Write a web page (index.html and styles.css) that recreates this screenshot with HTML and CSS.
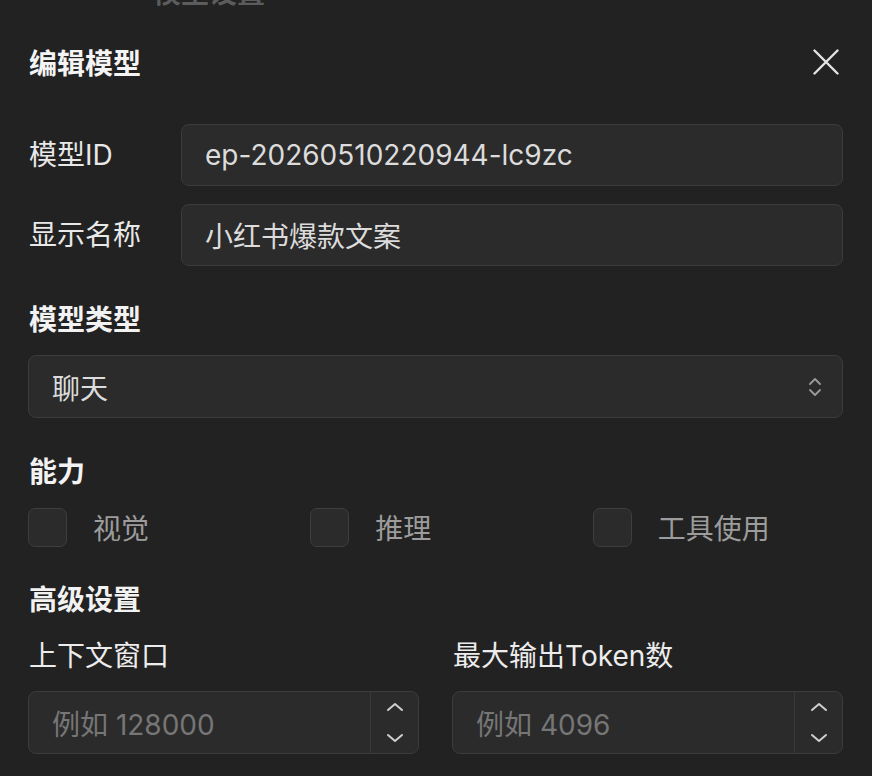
FILE: index.html
```html
<!DOCTYPE html>
<html lang="zh-CN">
<head>
<meta charset="utf-8">
<title>编辑模型</title>
<link rel="stylesheet" href="styles.css">
</head>
<body>
<div class="ghost">模型设置</div>
<div class="panel">
  <div class="header">
    <h2 class="title">编辑模型</h2>
    <button class="close" aria-label="关闭">
      <svg width="26" height="26" viewBox="0 0 26 26"><path d="M1.5 1.5 L24.5 24.5 M24.5 1.5 L1.5 24.5" stroke="#e4e4e4" stroke-width="2.4" stroke-linecap="round" fill="none"/></svg>
    </button>
  </div>

  <div class="field-row first">
    <label class="label">模型ID</label>
    <div class="input">ep-20260510220944-lc9zc</div>
  </div>
  <div class="field-row second">
    <label class="label">显示名称</label>
    <div class="input">小红书爆款文案</div>
  </div>

  <h3 class="section">模型类型</h3>
  <div class="select">
    <span>聊天</span>
    <svg class="updown" width="14" height="24" viewBox="0 0 14 24"><path d="M2 9 L7 4 L12 9 M2 15 L7 20 L12 15" stroke="#9a9a9a" stroke-width="1.8" stroke-linecap="round" stroke-linejoin="round" fill="none"/></svg>
  </div>

  <h3 class="section">能力</h3>
  <div class="checks">
    <label class="check"><span class="box"></span><span class="check-text">视觉</span></label>
    <label class="check"><span class="box"></span><span class="check-text">推理</span></label>
    <label class="check"><span class="box"></span><span class="check-text">工具使用</span></label>
  </div>

  <h3 class="section">高级设置</h3>
  <div class="adv">
    <div class="adv-col">
      <div class="sublabel">上下文窗口</div>
      <div class="number">
        <span class="placeholder">例如 128000</span>
        <div class="spin">
          <svg width="18" height="10" viewBox="0 0 18 10"><path d="M2 8 L9 2 L16 8" stroke="#cfcfcf" stroke-width="2" stroke-linecap="round" stroke-linejoin="round" fill="none"/></svg>
          <svg width="18" height="10" viewBox="0 0 18 10"><path d="M2 2 L9 8 L16 2" stroke="#cfcfcf" stroke-width="2" stroke-linecap="round" stroke-linejoin="round" fill="none"/></svg>
        </div>
      </div>
    </div>
    <div class="adv-col">
      <div class="sublabel">最大输出Token数</div>
      <div class="number">
        <span class="placeholder">例如 4096</span>
        <div class="spin">
          <svg width="18" height="10" viewBox="0 0 18 10"><path d="M2 8 L9 2 L16 8" stroke="#cfcfcf" stroke-width="2" stroke-linecap="round" stroke-linejoin="round" fill="none"/></svg>
          <svg width="18" height="10" viewBox="0 0 18 10"><path d="M2 2 L9 8 L16 2" stroke="#cfcfcf" stroke-width="2" stroke-linecap="round" stroke-linejoin="round" fill="none"/></svg>
        </div>
      </div>
    </div>
  </div>
</div>
</body>
</html>
```

FILE: styles.css
```css
* { box-sizing: border-box; }
html, body {
  margin: 0;
  padding: 0;
  background: #222222;
  overflow: hidden;
}
body {
  width: 872px;
  height: 776px;
  font-family: "Inter", "Noto Sans CJK SC", sans-serif;
  font-size: 28px;
  color: #e6e6e6;
}
.ghost {
  height: 32px;
  margin-top: -23px;
  padding-left: 153px;
  line-height: 32px;
  color: #5c5c5c;
  font-weight: 700;
}
.panel {
  padding: 0 29px 0 28px;
}
.header {
  display: flex;
  align-items: center;
  justify-content: space-between;
  height: 40px;
  margin-top: 35px;
}
.title {
  margin: 0 0 0 1px;
  font-size: 28px;
  font-weight: 700;
  color: #f4f4f4;
  line-height: 40px;
}
.close {
  background: none;
  border: 0;
  padding: 0;
  width: 26px;
  height: 26px;
  margin-right: 4px;
  margin-top: -4px;
  display: flex;
}
.field-row {
  display: grid;
  grid-template-columns: 153px 1fr;
  align-items: center;
}
.field-row.first { margin-top: 40px; }
.field-row.second { margin-top: 18px; }
.label {
  padding-left: 1px;
  color: #e8e8e8;
  line-height: 40px;
}
.input {
  height: 62px;
  border: 1.5px solid #3c3c3c;
  border-radius: 8px;
  background: #2b2b2b;
  padding-left: 23px;
  display: flex;
  align-items: center;
  color: #dcdcdc;
}
.section {
  margin: 34px 0 0 1px;
  font-size: 28px;
  font-weight: 700;
  line-height: 40px;
  color: #f2f2f2;
}
.select {
  margin-top: 15px;
  height: 63px;
  border: 1.5px solid #3c3c3c;
  border-radius: 8px;
  background: #2b2b2b;
  padding: 0 18px 0 23px;
  display: flex;
  align-items: center;
  justify-content: space-between;
  color: #dcdcdc;
}
.updown { margin-right: 2px; }
.checks {
  margin-top: 16px;
  display: grid;
  grid-template-columns: repeat(3, 1fr);
  column-gap: 32px;
}
.check {
  display: flex;
  align-items: center;
  height: 38px;
}
.box {
  width: 39px;
  height: 39px;
  border: 1.5px solid #3e3e3e;
  border-radius: 7px;
  background: #2b2b2b;
  flex: none;
}
.check-text {
  margin-left: 26px;
  color: #9c9c9c;
}
.adv {
  margin-top: 16px;
  display: grid;
  grid-template-columns: 1fr 1fr;
  column-gap: 33px;
}
.sublabel {
  padding-left: 1px;
  line-height: 40px;
  color: #ececec;
}
.number {
  margin-top: 15px;
  height: 63px;
  border: 1.5px solid #3c3c3c;
  border-radius: 8px;
  background: #2b2b2b;
  display: flex;
  align-items: stretch;
}
.placeholder {
  flex: 1;
  padding-left: 23px;
  display: flex;
  align-items: center;
  color: #767676;
}
.spin {
  width: 48px;
  border-left: 1.5px solid #3a3a3a;
  display: flex;
  flex-direction: column;
  align-items: center;
  justify-content: space-between;
  padding: 10px 0 10px;
}
```
